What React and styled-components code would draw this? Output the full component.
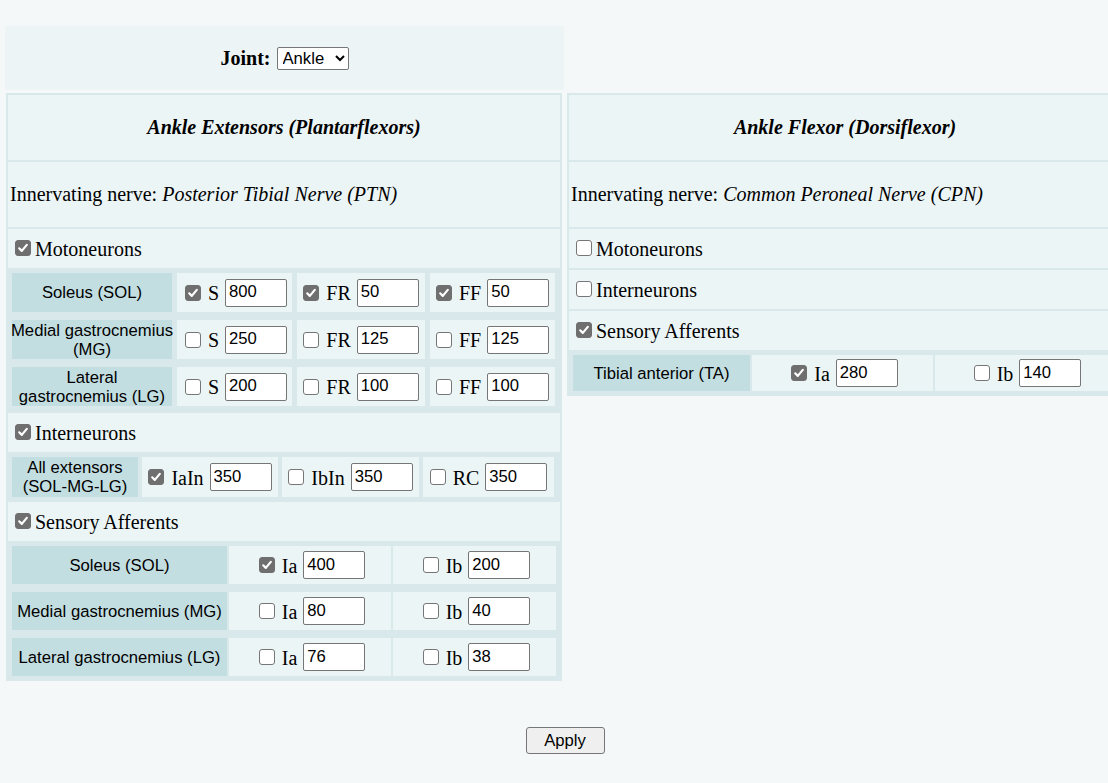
import React from "react";
import styled, { createGlobalStyle } from "styled-components";

const Global = createGlobalStyle`
  html { overflow: hidden; }
  body {
    margin: 0;
    background: #f4f8f9;
    font-family: "Liberation Serif", "Times New Roman", serif;
    font-size: 20px;
    color: #000;
  }
`;

const Page = styled.div`
  padding: 26px 0 0 5px;
  width: 1120px;
`;

const Layout = styled.div`
  display: grid;
  grid-template-columns: 559px 558px;
  column-gap: 3px;
  row-gap: 3px;
  align-items: start;
`;

const JointBar = styled.div`
  height: 64px;
  background: #ecf4f5;
  display: flex;
  align-items: center;
  justify-content: center;
  gap: 6px;
  font-weight: bold;
`;

const Select = styled.select`
  font-family: "Liberation Sans", Arial, sans-serif;
  font-size: 16.67px;
  width: 72px;
  height: 23px;
  padding: 0 1px;
  border: 1px solid #767676;
  border-radius: 2px;
  background: #fff;
  color: #000;
`;

const Panel = styled.div`
  width: 556px;
  box-sizing: border-box;
  margin-left: ${(p) => p.$offset || 0}px;
  background: #d9e9eb;
  padding: 2px;
  display: flex;
  flex-direction: column;
  gap: 2px;
`;

const TitleRow = styled.div`
  height: 65px;
  background: #ecf5f6;
  display: flex;
  align-items: center;
  justify-content: center;
  font-weight: bold;
  font-style: italic;
`;

const NerveRow = styled.div`
  height: 65px;
  background: #ecf5f6;
  display: flex;
  align-items: center;
  padding-left: 2px;
  white-space: pre;
  i { font-style: italic; }
`;

const ToggleRow = styled.div`
  height: 39px;
  background: #ecf5f6;
  display: flex;
  align-items: center;
  padding-left: 7px;
  gap: 4px;
  padding-top: 1px;
  box-sizing: border-box;
`;

const Box = styled.span`
  width: 16px;
  height: 16px;
  box-sizing: border-box;
  flex: none;
  border-radius: 3px;
  border: 1px solid ${(p) => (p.$on ? "#6f6f6f" : "#767676")};
  background: ${(p) => (p.$on ? "#6f6f6f" : "#fff")};
  display: flex;
  align-items: center;
  justify-content: center;
  margin-top: ${(p) => p.$dy || 0}px;
`;

const Check = ({ on, dy }) => (
  <Box $on={on} $dy={dy} role="checkbox" aria-checked={!!on}>
    {on && (
      <svg width="12" height="12" viewBox="0 0 12 12">
        <path
          d="M2.2 6.3 L4.8 8.9 L9.8 2.9"
          fill="none"
          stroke="#fff"
          strokeWidth="2.2"
          strokeLinecap="round"
          strokeLinejoin="round"
        />
      </svg>
    )}
  </Box>
);

const SubGrid = styled.div`
  display: grid;
  grid-template-columns: ${(p) => p.$cols};
  column-gap: ${(p) => p.$gap}px;
  row-gap: 8px;
  grid-auto-rows: ${(p) => p.$row}px;
  padding: 3px 4px ${(p) => p.$pb || 3}px 4px;
`;

const Label = styled.div`
  background: #c3dee1;
  display: flex;
  align-items: center;
  justify-content: center;
  text-align: center;
  font-family: "Liberation Sans", Arial, sans-serif;
  font-size: 16.67px;
  line-height: 19px;
  white-space: nowrap;
`;

const Cell = styled.div`
  background: #ecf5f6;
  display: flex;
  align-items: center;
  justify-content: center;
  padding-left: ${(p) => p.$shift || 0}px;
`;

const CellLabel = styled.span`
  margin: 0 6px 0 7px;
  padding-top: 2px;
`;

const NumInput = styled.input`
  width: 62px;
  height: 28px;
  box-sizing: border-box;
  border: 1px solid #767676;
  border-radius: 2px;
  padding: 0 3px 1px;
  font-family: "Liberation Sans", Arial, sans-serif;
  font-size: 16.67px;
  color: #000;
  background: #fff;
`;

const Footer = styled.div`
  display: flex;
  justify-content: center;
  margin-top: 46px;
`;

const Button = styled.button`
  width: 79px;
  height: 27px;
  font-family: "Liberation Sans", Arial, sans-serif;
  font-size: 16.67px;
  background: #efefef;
  border: 1px solid #767676;
  border-radius: 3px;
  color: #000;
  padding: 0;
`;

const Field = ({ checked, name, value, shift }) => (
  <Cell $shift={shift}>
    <Check on={checked} />
    <CellLabel>{name}</CellLabel>
    <NumInput defaultValue={value} />
  </Cell>
);

const Lines = ({ lines }) => (
  <Label>
    <div>
      {lines.map((l, i) => (
        <React.Fragment key={i}>
          {i > 0 && <br />}
          {l}
        </React.Fragment>
      ))}
    </div>
  </Label>
);

const moto = [
  [["Soleus (SOL)"], [[true, "800"], [true, "50"], [true, "50"]]],
  [["Medial gastrocnemius", "(MG)"], [[false, "250"], [false, "125"], [false, "125"]]],
  [["Lateral", "gastrocnemius (LG)"], [[false, "200"], [false, "100"], [false, "100"]]],
];

const sens = [
  ["Soleus (SOL)", true, "400", "200"],
  ["Medial gastrocnemius (MG)", false, "80", "40"],
  ["Lateral gastrocnemius (LG)", false, "76", "38"],
];

export default function App() {
  return (
    <>
      <Global />
      <Page>
        <Layout>
          <JointBar>
            Joint:
            <Select defaultValue="Ankle">
              <option>Ankle</option>
              <option>Knee</option>
              <option>Hip</option>
            </Select>
          </JointBar>
          <div />
          <Panel $offset={1}>
            <TitleRow>Ankle Extensors (Plantarflexors)</TitleRow>
            <NerveRow>
              Innervating nerve: <i>Posterior Tibial Nerve (PTN)</i>
            </NerveRow>
            <ToggleRow>
              <Check on dy={-2} />
              Motoneurons
            </ToggleRow>
            <SubGrid $cols="160px 115px 128px 125px" $gap={5} $row={39} $pb={5}>
              {moto.map(([lines, vals]) => (
                <React.Fragment key={lines.join(" ")}>
                  <Lines lines={lines} />
                  <Field checked={vals[0][0]} name="S" value={vals[0][1]} shift={3} />
                  <Field checked={vals[1][0]} name="FR" value={vals[1][1]} />
                  <Field checked={vals[2][0]} name="FF" value={vals[2][1]} />
                </React.Fragment>
              ))}
            </SubGrid>
            <ToggleRow>
              <Check on dy={-2} />
              Interneurons
            </ToggleRow>
            <SubGrid $cols="126px 136px 137px 131px" $gap={4} $row={40}>
              <Lines lines={["All extensors", "(SOL-MG-LG)"]} />
              <Field checked name="IaIn" value="350" />
              <Field name="IbIn" value="350" />
              <Field name="RC" value="350" />
            </SubGrid>
            <ToggleRow>
              <Check on dy={-2} />
              Sensory Afferents
            </ToggleRow>
            <SubGrid $cols="215px 162px 163px" $gap={2} $row={38}>
              {sens.map(([name, c, a, b]) => (
                <React.Fragment key={name}>
                  <Label>{name}</Label>
                  <Field checked={c} name="Ia" value={a} shift={4} />
                  <Field name="Ib" value={b} shift={4} />
                </React.Fragment>
              ))}
            </SubGrid>
          </Panel>
          <Panel>
            <TitleRow>Ankle Flexor (Dorsiflexor)</TitleRow>
            <NerveRow>
              Innervating nerve: <i>Common Peroneal Nerve (CPN)</i>
            </NerveRow>
            <ToggleRow>
              <Check dy={-2} />
              Motoneurons
            </ToggleRow>
            <ToggleRow>
              <Check dy={-2} />
              Interneurons
            </ToggleRow>
            <ToggleRow>
              <Check on dy={-2} />
              Sensory Afferents
            </ToggleRow>
            <SubGrid $cols="177px 181px 181px" $gap={2} $row={36}>
              <Label>Tibial anterior (TA)</Label>
              <Field checked name="Ia" value="280" shift={4} />
              <Field name="Ib" value="140" shift={4} />
            </SubGrid>
          </Panel>
        </Layout>
        <Footer>
          <Button>Apply</Button>
        </Footer>
      </Page>
    </>
  );
}
